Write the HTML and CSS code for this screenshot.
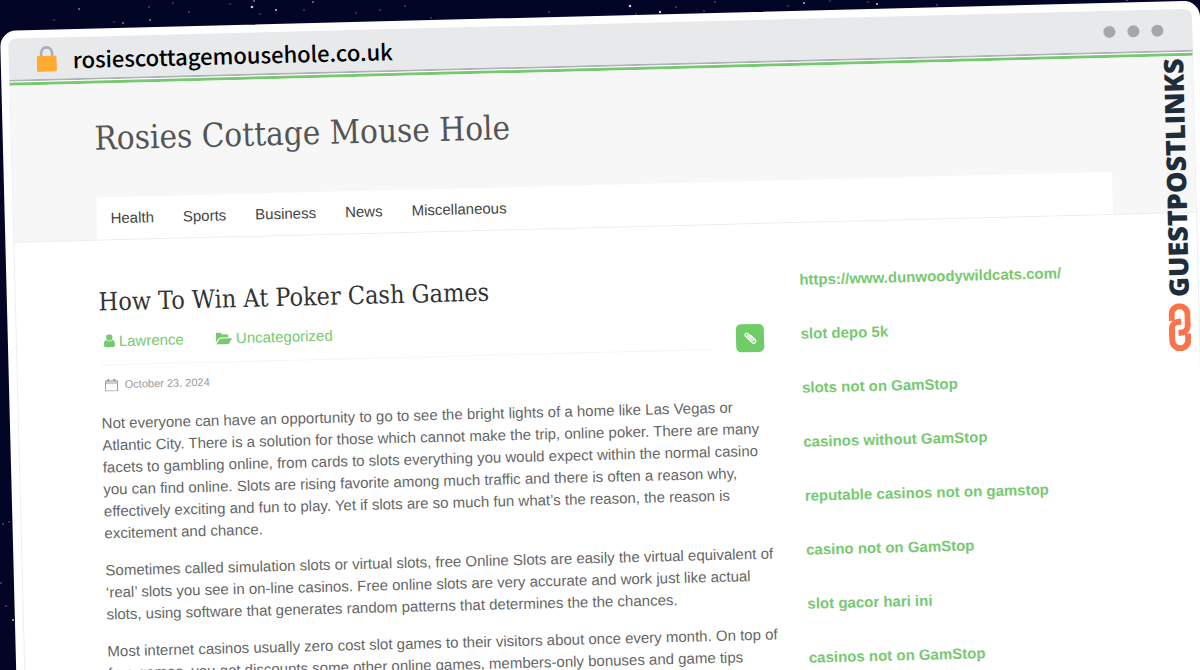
FILE: index.html
```html
<!DOCTYPE html>
<html lang="en">
<head>
    <meta charset="UTF-8">
    <title>Rosies Cottage Mouse Hole</title>
    <link rel="stylesheet" href="styles.css">
</head>

<body>

<svg class="stars" width="1200" height="670" fill="#fff" aria-hidden="true">
    <g opacity="0.8">
        <circle cx="252" cy="7" r="1.3"/>
        <circle cx="254" cy="1" r="0.8"/>
        <circle cx="276" cy="10" r="1"/>
        <circle cx="150" cy="20" r="0.8"/>
        <circle cx="123" cy="23" r="0.8"/>
        <circle cx="79" cy="9" r="0.8"/>
        <circle cx="313" cy="2" r="0.8"/>
        <circle cx="630" cy="6" r="1.3"/>
        <circle cx="660" cy="12" r="1.2"/>
        <circle cx="877" cy="4" r="1"/>
        <circle cx="804" cy="3" r="0.9"/>
        <circle cx="13" cy="620" r="0.9"/>
    </g>
    <g opacity="0.45">
        <circle cx="54" cy="20" r="0.7"/>
        <circle cx="114" cy="22" r="0.7"/>
        <circle cx="149" cy="7" r="0.8"/>
        <circle cx="173" cy="3" r="0.7"/>
        <circle cx="189" cy="12" r="0.8"/>
        <circle cx="230" cy="4" r="0.7"/>
        <circle cx="260" cy="14" r="0.7"/>
        <circle cx="304" cy="10" r="0.7"/>
        <circle cx="356" cy="13" r="0.7"/>
        <circle cx="380" cy="10" r="0.8"/>
        <circle cx="405" cy="6" r="0.7"/>
        <circle cx="431" cy="18" r="0.7"/>
        <circle cx="549" cy="12" r="0.7"/>
        <circle cx="636" cy="14" r="0.8"/>
        <circle cx="676" cy="7" r="0.8"/>
        <circle cx="704" cy="11" r="0.7"/>
        <circle cx="715" cy="2" r="0.8"/>
        <circle cx="788" cy="6" r="0.7"/>
        <circle cx="830" cy="1" r="0.7"/>
        <circle cx="868" cy="2" r="0.7"/>
        <circle cx="937" cy="5" r="0.8"/>
        <circle cx="1127" cy="0" r="0.9"/>
        <circle cx="3" cy="524" r="0.8"/>
        <circle cx="9" cy="522" r="0.7"/>
        <circle cx="1" cy="583" r="0.8"/>
        <circle cx="6" cy="606" r="0.8"/>
    </g>
</svg>

<div class="window">
    <div class="address_bar">
        <svg class="lock" width="20" height="26" viewBox="0 0 20 26" aria-hidden="true">
            <path d="M4.500 11V7a5.500 5.500 0 0 1 11 0v4" fill="none" stroke="#a9b0ba" stroke-width="2.600"/>
            <rect x="0" y="10" width="20" height="16" rx="2" fill="#ffab33"/>
        </svg>
        <span class="url">rosiescottagemousehole.co.uk</span>
        <span class="dot"></span>
        <span class="dot"></span>
        <span class="dot"></span>
    </div>

    <div class="site">
        <header>
            <div class="container">
                <h1>Rosies Cottage Mouse Hole</h1>
                <nav>
                    <a href="#">Health</a>
                    <a href="#">Sports</a>
                    <a href="#">Business</a>
                    <a href="#">News</a>
                    <a href="#">Miscellaneous</a>
                </nav>
            </div>
        </header>

        <div class="container columns">
            <article>
                <h2>How To Win At Poker Cash Games</h2>
                <div class="post_info">
                    <div class="meta">
                        <a href="#">
                            <svg width="11" height="13" viewBox="0 0 11 13" fill="currentColor" aria-hidden="true">
                                <circle cx="5.500" cy="3.200" r="3.200"/>
                                <path d="M2.200 5.700C.6 6 0 7.800 0 10.200 0 12 .8 13 2 13h7c1.200 0 2-1 2-2.800 0-2.400-.6-4.200-2.200-4.500a4.500 4.500 0 0 1-6.600 0z"/>
                            </svg>
                            Lawrence
                        </a>
                        <a href="#">
                            <svg width="16" height="12" viewBox="0 0 16 12" fill="currentColor" aria-hidden="true">
                                <path d="M0 9.800V1.500C0 .6.600 0 1.500 0h2.700c.9 0 1.500.6 1.500 1.500V2h5.200c.9 0 1.500.6 1.500 1.500V5H5.200c-1 0-2.200.6-2.900 1.400z"/>
                                <path d="M.6 11.500 3.300 7c.4-.6 1.200-1 1.900-1h10c.8 0 1 .4.600 1l-2.700 4c-.4.600-1.200 1-1.900 1h-10c-.6 0-.8-.2-.6-.5z"/>
                            </svg>
                            Uncategorized
                        </a>
                    </div>
                    <span class="format">
                        <svg width="14" height="14" viewBox="0 0 14 14" fill="none" stroke="#fff" stroke-width="1.300" stroke-linecap="round" aria-hidden="true">
                            <path d="M4.200 4.200 9 9c1 1 2.200-.2 1.300-1.200L5 2.500C3.300.9.900 3.100 2.600 5l6.300 6.400c2.300 2.200 5.200-.7 3-3L8 4.400"/>
                        </svg>
                    </span>
                </div>
                <div class="date">
                    <svg width="13" height="13" viewBox="0 0 13 13" fill="none" stroke="currentColor" aria-hidden="true">
                        <path d="M.5 2.500h12v10H.5zM.5 4.500h12"/>
                        <path d="M3.500.5v2.500M9.500.5v2.500" stroke-width="2"/>
                    </svg>
                    October 23, 2024
                </div>
                <p>Not everyone can have an opportunity to go to see the bright lights of a home like Las Vegas or Atlantic City. There is a solution for those which cannot make the trip, online poker. There are many facets to gambling online, from cards to slots everything you would expect within the normal casino you can find online. Slots are rising favorite among much traffic and there is often a reason why, effectively exciting and fun to play. Yet if slots are so much fun what’s the reason, the reason is excitement and chance.</p>
                <p>Sometimes called simulation slots or virtual slots, free Online Slots are easily the virtual equivalent of ‘real’ slots you see in on-line casinos. Free online slots are very accurate and work just like actual slots, using software that generates random patterns that determines the the chances.</p>
                <p>Most internet casinos usually zero cost slot games to their visitors about once every month. On top of free games, you get discounts some other online games, members-only bonuses and game tips</p>
            </article>

            <aside>
                <a href="#">https://www.dunwoodywildcats.com/</a>
                <a href="#">slot depo 5k</a>
                <a href="#">slots not on GamStop</a>
                <a href="#">casinos without GamStop</a>
                <a href="#">reputable casinos not on gamstop</a>
                <a href="#">casino not on GamStop</a>
                <a href="#">slot gacor hari ini</a>
                <a href="#">casinos not on GamStop</a>
            </aside>
        </div>
    </div>

    <div class="brand">
        <span>GUESTPOSTLINKS</span>
        <svg width="22" height="48" viewBox="0 0 22 48" fill="none" stroke="#fb734b" stroke-width="6" aria-hidden="true">
            <path d="M3 17.500V11a8 8 0 0 1 16 0v11.500a7 7 0 0 1-7 7H9.500"/>
            <path d="M19 30.500V37a8 8 0 0 1-16 0V25.500a7 7 0 0 1 7-7h2.500"/>
        </svg>
    </div>
</div>

</body>

</html>
```
FILE: styles.css
```css
body {
    position: relative;
    margin: 0;
    height: 100vh;
    overflow: hidden;
    background: #020525;
    font-family: "Liberation Sans", Arial, sans-serif;
    font-size: 15px;
    line-height: 22px;
    color: #666;
}

a {
    color: #77c970;
    text-decoration: none;
}

.stars {
    position: absolute;
    top: 0;
    left: 0;
}

/* the whole browser window is tilted */
.window {
    position: relative;
    box-sizing: border-box;
    margin-top: 31px;
    min-height: 100vh;
    border: 8px solid white;
    border-radius: 16px;
    background: white;
    transform: rotate(-1.45deg);
    transform-origin: 0 0;
}

.address_bar {
    display: flex;
    align-items: center;
    gap: 12px;
    height: 41px;
    padding: 0 29px 0 28px;
    border-bottom: 2px solid #b0b0b8;
    border-radius: 8px 8px 0 0;
    background: #e8e9eb;
}

.url {
    flex: 1;
    margin-left: 4px;
    font-family: "Noto Sans CJK SC", sans-serif;
    font-size: 22px;
    font-weight: 500;
    color: black;
}

.dot {
    width: 12px;
    height: 12px;
    border-radius: 50%;
    background: #a6a7ab;
}

.site {
    margin-top: 1px;
    border: 1px solid #eee;
    border-top: 3px solid #77c970;
}

header {
    border-bottom: 1px solid #eee;
    background: #f7f7f7;
}

.container {
    width: 86%;
    margin: 0 auto;
}

h1, h2 {
    margin: 0;
    font-family: "Roboto Slab", "DejaVu Serif Condensed", "DejaVu Serif", serif;
    font-weight: normal;
}

h1 {
    padding: 33px 0 37px;
    font-size: 33px;
    line-height: 44px;
    color: #555;
}

nav {
    display: flex;
    gap: 29px;
    padding: 10px 14px;
    background: white;
}

nav a {
    color: #444;
}

.columns {
    display: grid;
    grid-template-columns: 676px 1fr;
    gap: 25px;
    padding-top: 46px;
}

h2 {
    font-size: 25px;
    line-height: 32px;
    color: #333;
}

.post_info {
    display: flex;
    gap: 24px;
    margin: 12px 12px 0 0;
}

.meta {
    display: flex;
    flex: 1;
    gap: 32px;
    height: 34px;
    padding-left: 4px;
    border-bottom: 1px solid #f5f5f5;
}

.format {
    display: flex;
    align-items: center;
    justify-content: center;
    width: 28px;
    height: 28px;
    margin-top: 10px;
    border-radius: 5px;
    background: #70cc67;
}

.meta svg {
    vertical-align: -1px;
}

.date {
    display: flex;
    align-items: center;
    gap: 7px;
    margin: 5px 0 17px 4px;
    font-size: 11px;
    color: #999;
}

p {
    margin: 0 0 15px;
}

aside {
    display: flex;
    flex-direction: column;
    align-items: flex-start;
    gap: 32px;
    font-weight: bold;
}

/* side label that lies over the site */
.brand {
    position: absolute;
    top: 49px;
    right: 6px;
    display: flex;
    flex-direction: column;
    align-items: center;
    gap: 6px;
}

.brand span {
    font-family: "Open Sans", sans-serif;
    font-size: 27px;
    font-weight: 800;
    line-height: 28px;
    color: #1f2d3a;
    writing-mode: vertical-rl;
    transform: rotate(180deg);
}
```
